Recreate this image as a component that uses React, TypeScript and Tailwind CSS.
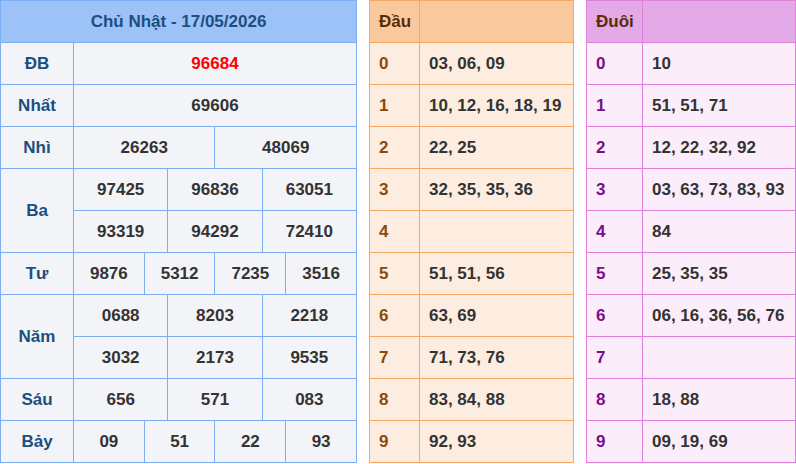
import React from "react";

const F = { fontFamily: '"Liberation Sans", Arial, sans-serif' };

function Main() {
  const lbl = "border border-[#7eaef2] text-[#1b4f7e] text-center h-[42px] w-[73px]";
  const v = "border border-[#7eaef2] text-[#333] text-center h-[42px]";
  return (
    <table className="border-collapse bg-[#f3f4f8] w-[357px] table-fixed font-bold text-[17px]" style={F}>
      <colgroup>
        <col className="w-[73px]" />
        {Array.from({ length: 12 }).map((_, i) => <col key={i} />)}
      </colgroup>
      <tbody>
        <tr><td colSpan={13} className="border border-[#7eaef2] bg-[#9dc2f7] text-[#1b4f7e] text-center h-[42px]">Chủ Nhật - 17/05/2026</td></tr>
        <tr><td className={lbl}>ĐB</td><td colSpan={12} className={v + " !text-[#ff0000]"}>96684</td></tr>
        <tr><td className={lbl}>Nhất</td><td colSpan={12} className={v}>69606</td></tr>
        <tr><td className={lbl}>Nhì</td>{["26263","48069"].map(n=><td key={n} colSpan={6} className={v}>{n}</td>)}</tr>
        <tr><td rowSpan={2} className={lbl}>Ba</td>{["97425","96836","63051"].map(n=><td key={n} colSpan={4} className={v}>{n}</td>)}</tr>
        <tr>{["93319","94292","72410"].map(n=><td key={n} colSpan={4} className={v}>{n}</td>)}</tr>
        <tr><td className={lbl}>Tư</td>{["9876","5312","7235","3516"].map(n=><td key={n} colSpan={3} className={v}>{n}</td>)}</tr>
        <tr><td rowSpan={2} className={lbl}>Năm</td>{["0688","8203","2218"].map(n=><td key={n} colSpan={4} className={v}>{n}</td>)}</tr>
        <tr>{["3032","2173","9535"].map(n=><td key={n} colSpan={4} className={v}>{n}</td>)}</tr>
        <tr><td className={lbl}>Sáu</td>{["656","571","083"].map(n=><td key={n} colSpan={4} className={v}>{n}</td>)}</tr>
        <tr><td className={lbl}>Bảy</td>{["09","51","22","93"].map(n=><td key={n} colSpan={3} className={v}>{n}</td>)}</tr>
      </tbody>
    </table>
  );
}

function Side({ title, data, w, c1, border, head, bg, num }: { title: string; data: string[]; w: string; c1: string; border: string; head: string; bg: string; num: string }) {
  return (
    <table className={`border-collapse table-fixed font-bold text-[17px] ${w} ${bg}`} style={F}>
      <colgroup><col className={c1} /><col /></colgroup>
      <tbody>
        <tr className={head}>
          <td className={`border ${border} h-[42px] px-[9px] text-[#5c2a07]`}>{title}</td>
          <td className={`border ${border}`}></td>
        </tr>
        {data.map((d, i) => (
          <tr key={i}>
            <td className={`border ${border} h-[42px] px-[9px] ${num}`}>{i}</td>
            <td className={`border ${border} px-[9px] text-[#333]`}>{d}</td>
          </tr>
        ))}
      </tbody>
    </table>
  );
}

export default function App() {
  return (
    <div className="flex items-start w-[796px] h-[464px] bg-white">
      <Main />
      <div className="ml-[12px]">
        <Side title="Đầu" w="w-[205px]" c1="w-[50px]" border="border-[#f5a862]" head="bg-[#f9c99d]" bg="bg-[#fdede1]" num="text-[#8b4a0c]"
          data={["03, 06, 09","10, 12, 16, 18, 19","22, 25","32, 35, 35, 36","","51, 51, 56","63, 69","71, 73, 76","83, 84, 88","92, 93"]} />
      </div>
      <div className="ml-[12px]">
        <Side title="Đuôi" w="w-[210px]" c1="w-[56px]" border="border-[#e27fdb]" head="bg-[#e4aae8]" bg="bg-[#fbeefa]" num="text-[#7b0e8c]"
          data={["10","51, 51, 71","12, 22, 32, 92","03, 63, 73, 83, 93","84","25, 35, 35","06, 16, 36, 56, 76","","18, 88","09, 19, 69"]} />
      </div>
    </div>
  );
}
